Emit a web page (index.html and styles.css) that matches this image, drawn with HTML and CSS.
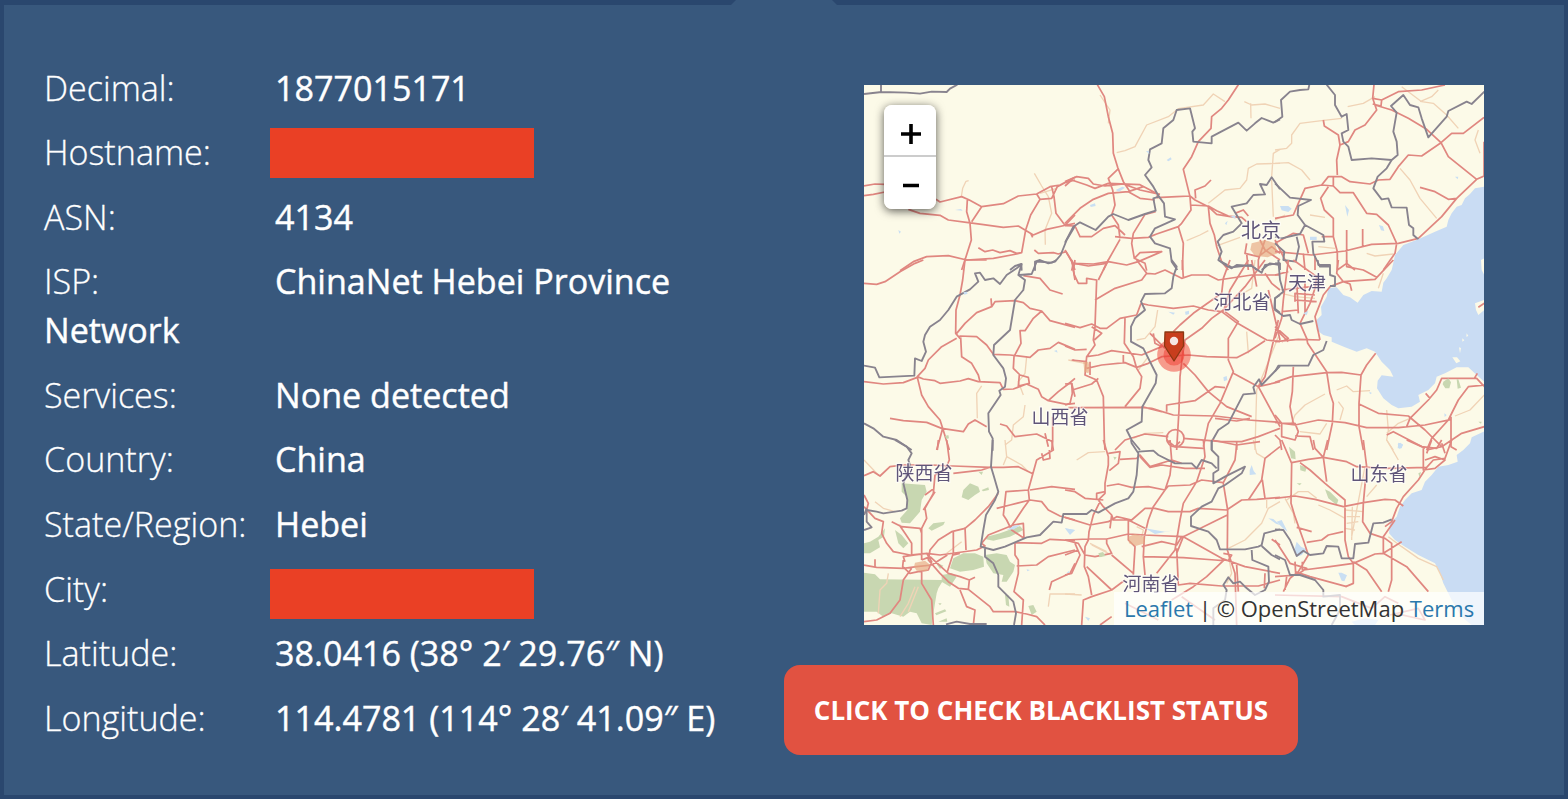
FILE: index.html
```html
<!DOCTYPE html>
<html lang="en">
<head>
<meta charset="utf-8">
<title>IP Details</title>
<link rel="stylesheet" href="styles.css">
</head>
<body>
<main class="panel">
  <span class="notch"></span>
  <section class="details">
    <p class="row"><span class="label">Decimal:</span><span class="value">1877015171</span></p>
    <p class="row"><span class="label">Hostname:</span><span class="redacted"></span></p>
    <p class="row"><span class="label">ASN:</span><span class="value">4134</span></p>
    <p class="row"><span class="label">ISP:</span><span class="value">ChinaNet Hebei Province</span><br><span class="value">Network</span></p>
    <p class="row"><span class="label">Services:</span><span class="value">None detected</span></p>
    <p class="row"><span class="label">Country:</span><span class="value">China</span></p>
    <p class="row"><span class="label">State/Region:</span><span class="value">Hebei</span></p>
    <p class="row"><span class="label">City:</span><span class="redacted low"></span></p>
    <p class="row"><span class="label">Latitude:</span><span class="value">38.0416 (38° 2′ 29.76″ N)</span></p>
    <p class="row"><span class="label">Longitude:</span><span class="value">114.4781 (114° 28′ 41.09″ E)</span></p>
  </section>
  <section class="side">
    <div class="map">
      <svg class="tiles" width="620" height="540" viewBox="0 0 620 540">
        <!-- north-west -->
        <g transform="translate(-4 -5) scale(.33333)">
          <path class="minor" d="M304 350L308 325L318 304L326 302M523 280L545 318L565 350L575 400L555 450L556 494M540 340L590 325"/>
          <path class="road" d="M12 318L45 312L75 313M12 347L40 343L75 336M228 358L240 366L305 350L328 360L365 380L430 371L475 348L530 342L570 320L600 315L645 292M145 388L180 400L240 406L265 420L325 428L365 433L430 442L475 438L520 465L560 448L620 435L645 430M365 380L335 425M322 360L320 395L330 430L334 480L318 530L305 570M120 572L160 545L200 530L265 527L320 540L400 535L470 522L485 518L497 450L512 405L540 358L530 342M355 503L375 515L398 510L420 518L450 512L470 520L485 518M523 510L535 520L580 518L595 522L618 515L635 545L645 570M540 358L575 355L592 320L615 308L645 300M575 320L582 350L588 400L615 436L645 405M512 460L518 472"/>
          <path class="border" d="M12 42L65 36L140 38L180 41L215 35L260 36L270 26L292 14M63 12L63 36M645 438L620 480L602 525L585 545L565 550L540 540L525 545L525 572M485 572L484 552L465 558L450 570"/>
          <path class="water" d="M115 450l8 5-5 6zM102 478l5 3zM285 390l18-3 5 5z"/>
        </g>
        <!-- north -->
        <g transform="translate(201 -5) scale(.33333)">
          <path class="minor" d="M155 218L180 212L210 200L245 135L310 110L340 86L415 75L445 42L480 65M538 65L560 75L600 72L645 85M557 70L558 115M430 370L480 330L525 325L545 300L550 265L575 252L645 250M645 208L625 220L620 290M365 482L405 465L430 452M455 498L525 472M620 300L625 410M105 45L135 90L130 130"/>
          <path class="road" d="M97 14L118 50L130 110L143 160L145 220L158 262L175 305L195 335M0 318L20 300L65 315L90 325L130 310L225 314L280 343L275 350M0 305L35 290L70 295L85 312L120 318L175 312L225 330L285 343M158 268L130 295L143 330L150 375L140 405L160 435L165 475M0 430L45 385L85 358L130 340L190 335L235 320M190 335L225 355L270 360M275 353L335 350L375 348L390 360L430 380L455 403L510 412M520 14L490 60L470 85L440 110L438 145L400 185L380 230L355 268L375 350L378 390L350 430L340 440L275 462L250 472L200 475L150 470M438 300L420 318L390 330L392 355M0 437L30 438L45 470L80 470L115 445L150 437L180 465M272 395L240 403L205 460L200 490L208 535L240 550L245 572M20 572L25 550L85 552L130 545L185 555L220 545L290 515L225 518L208 535M0 510L25 550M165 478L130 540L115 570M340 440L355 490L352 570M378 375L430 378L455 392L490 408L530 412L545 425M430 380L435 430L448 465L455 500L470 545L490 570M510 400L535 390L550 408M545 490L540 520L580 530L620 500L645 520M550 570L545 520M585 480L600 510L645 540M600 480L580 540L580 570"/>
          <path class="border" d="M645 118L625 128L610 122L590 114L570 130L545 152L520 128L440 170L440 190L385 185L382 155L390 145L375 85L335 90L325 120L295 145L290 190L255 208L250 240L260 262L240 285L265 320L282 350L297 370L300 410L330 418L270 445L255 470L270 490L315 505L320 545L337 570M282 350L265 355L272 392L240 402L190 420L145 402L130 410L92 450L45 427L25 440L0 488M645 328L620 292L605 315L585 312L600 343L565 345L545 370L500 380L530 430L505 455L475 465L458 485L470 515L460 540L500 562L560 555L575 570M590 570L615 550L645 555"/>
          <path class="water" d="M152 330l20-10 8 3-18 12zM75 375l15-5 2 8-15 3zM305 240l12-8 3 6-10 6zM243 213l8 0 2 10zM480 430l8-8-4 14zM495 410l15-4 3 10z"/>
          <path class="city" d="M560 490l40-10 30 10 8 30-30 12-38-5-14-18z"/>
        </g>
        <!-- north-east -->
        <g transform="translate(411 -5) scale(.33333)">
          <path class="minor" d="M0 210L35 205L50 190L50 165L75 130L140 122L200 115M0 250L40 248L80 270L105 300M218 80L265 70L300 50M380 20L440 65L475 70L515 105L550 145M435 65L470 50L490 30M375 265L405 300L435 355L485 415M610 150L600 180L615 220M105 405L150 412M275 520L300 528L355 522M0 420L30 405M130 500L180 505"/>
          <path class="road" d="M297 14L293 55L305 90L270 135L240 150L220 185L195 195L185 240L187 285M293 55L320 60L370 35L440 30L510 15M300 75L350 90L400 115L455 148L498 188L520 230L605 298M320 60L318 78L293 72M145 120L148 138L190 165L195 195M627 112L565 160L530 160L498 188L440 228L400 225L370 260L345 298L310 300L285 312L225 305L200 290L160 290L140 315L90 325L70 370L55 405L0 415M140 315L175 318L195 338L235 338L275 400L305 403L340 435L365 490M175 290L175 318M160 320L137 355L148 390L175 415L175 470L187 515L187 570M435 322L480 335L520 358L545 355M627 288L605 298L545 355L500 410L430 475L370 490L290 493L210 513L110 525L0 515M627 185L627 290M215 450L215 510L215 550L240 570M263 447L263 502M365 490L360 520L325 570M0 490L55 460L85 465L100 520M175 470L140 470M120 525L120 570M187 570L215 550M85 520L90 570M0 480L30 540L50 570"/>
          <path class="border" d="M0 126L22 110L18 60L45 35L75 30L100 28L103 14M155 14L180 45L180 75L200 110L215 102L220 150L200 160L205 185L220 200L230 240L290 235L350 240L368 225L365 185L355 155L365 98L348 78L385 45L405 75L430 82L440 115L460 172L515 110L520 93L575 65L590 72L628 35M350 240L335 265L308 290L295 325L320 358L340 355L350 382L395 383L402 435L415 445L415 465L432 480M0 310L45 353L108 360L70 378L68 405L90 435L75 462L20 475L0 470M90 435L145 465L148 485L112 485L115 520L135 560L165 560M65 470L72 500L62 545L25 540L28 515L0 490M0 550L15 550L15 570"/>
          <path class="water" d="M15 378l25 0 10 8-10 10-20-5zM105 470l20 0 0 10-20 0zM210 375l12 15-5 20zM312 435l12 4 4 14-10-2zM540 290l10 0-2 8zM480 220l10 2z"/>
        </g>
        <!-- west -->
        <g transform="translate(-4 175) scale(.33333)">
          <path class="minor" d="M365 378L350 400L352 475M500 290L495 340L475 365L490 405M495 435L490 470L460 495L455 540L435 555"/>
          <path class="road" d="M12 70L50 73L75 65L120 35L165 10L190 0M318 0L380 0M315 0L308 60L300 105L288 150L287 220L300 235M290 220L315 190L350 158L395 140L405 125L465 122L490 128L510 145L545 153L570 182L645 202M393 115L395 140M490 47L540 55L570 90L608 102M545 153L520 175L495 212L480 212L483 250L462 290L460 325L480 345L505 352L508 370L475 378L478 345M298 228L350 230L380 255L400 283L450 285L510 292L535 270L570 265L595 247L645 268M302 232L305 290L335 310L355 345L360 365M290 235L245 260L205 300L195 325L172 350L190 357L225 362L240 370L300 363L325 356L355 365L420 368L430 388L460 387L500 372L535 388L545 410L565 422L620 433L645 430M12 365L70 372L130 368L172 352L185 405L205 440L240 480L248 505L240 535L230 570M90 475L130 482L200 487L245 505L310 515L325 492L345 480L380 500M248 505L268 570M645 0L640 30L645 60M565 422L595 395L625 372L645 355M635 370L645 410M420 492L440 498L465 530L530 522L578 545L575 570M578 470L578 545M645 303L638 300M555 520L565 560"/>
          <path class="border" d="M12 317L45 323L58 352L163 347L165 295L185 303L198 275L190 245L195 225L210 200L240 180L265 150L290 110L330 88L355 65L345 40L360 38L375 60L400 55L420 72L440 45L470 25L485 12L475 45L495 60L490 90L465 120L450 210L402 255L400 285L430 325L438 355L435 380L418 392L422 405L385 460L387 515L398 535L398 572M478 45L515 42L530 5L575 8L590 0M12 490L40 505L70 530L110 540L155 570"/>
          <path class="water" d="M310 97l10-2 3 6-10 3zM582 273l8-3 3 8z"/>
          <path class="green" d="M255 528l10-3 2 10-8 2z"/>
        </g>
        <!-- centre -->
        <g transform="translate(201 175) scale(.33333)">
          <path class="minor" d="M278 150L270 200L240 235L215 240M250 290L220 330M545 215L550 280M640 230L600 330L575 390L570 570M205 535L240 520L295 518M500 120L560 85L570 0M10 300L60 310"/>
          <path class="road" d="M20 0L28 45L40 70L65 70L65 55L95 60L90 200L85 240L90 255L65 290L60 345L95 360L115 410L118 540L120 570M28 10L70 18L125 10L130 0M125 10L100 60M215 0L245 40L270 42L300 30L350 55L380 45L430 45L460 60L560 45L645 45M245 40L230 60L150 85L90 120M352 0L355 55M228 130L250 135L325 145L385 138L430 150L470 155L510 185L605 240L645 245M228 130L215 165L165 175L125 205L105 205L80 192L45 203L0 190M180 175L178 250L205 290L215 325L230 350L225 385L180 440M80 200L110 220L88 240M65 290L100 285L140 272L230 285L290 260L270 250L265 220M65 325L110 315L180 308L215 322L250 310L290 290L370 285L425 290L515 293L550 275L600 242M175 285L175 310M600 0L540 80L475 150L440 175L410 205L360 240L352 290L345 350L342 450L335 570M495 0L475 55L470 100L385 160L345 195L325 215M550 0L495 90L475 155M0 258L30 270L65 268M20 300L65 305M75 305L75 345M0 372L20 370L22 400L15 430L0 435M22 390L80 372L100 355M10 443L230 442L260 445L325 465L450 468L550 480L645 487M230 440L290 455M480 155L520 185L490 235L490 300L505 335L465 430L430 490L415 560M355 310L390 345L430 395L485 440L560 470M555 475L515 483L450 475M305 455L305 435L390 422L450 380L480 383M505 340L580 380L645 500M580 380L645 365M150 570L180 540L240 522L310 530M355 535L470 545L530 545L580 530L645 505M515 545L515 570M640 180L600 350L580 380M610 90L645 240M560 0L575 80M600 40L620 70L645 90M255 220L300 265"/>
          <circle class="road" cx="331" cy="535" r="26"/>
          <path class="border" d="M320 0L335 20L325 50L320 85L300 100L240 102L228 125L240 150L210 175L198 200L198 245L235 265L275 345L272 370L232 440L230 485L185 510L200 540L225 570M460 0L485 18L500 25L515 15L560 18L590 38L600 15L645 10M645 318L590 375L582 358L565 382L570 400L535 403L490 490L460 510L440 545L440 570M645 105L630 115L628 145L645 158"/>
          <path class="water" d="M360 155l12-3 0 10-10 3zM475 352l10-4 2 12-10 4zM310 155l20 3-5 6z"/>
          <path class="city" d="M55 305l15 0 5 20-5 15-12-5z"/>
        </g>
        <!-- east -->
        <g transform="translate(411 175) scale(.33333)">
          <path class="sea" d="M628 -220L600 -215L585 -198L570 -185L560 -165L545 -160L530 -140L520 -120L515 -100L480 -85L430 -62L385 -45L360 -15L355 8L350 30L335 55L325 68L320 95L290 93L265 105L248 128L225 112L205 105L185 82L160 85L155 110L138 140L140 165L125 180L125 210L145 225L170 232L170 245L210 262L245 275L275 265L300 275L320 305L345 330L355 350L320 346L308 362L306 385L325 415L350 435L370 445L410 440L435 425L430 405L460 390L480 370L485 350L510 340L545 322L580 322L605 345L628 365Z"/>
          <path class="land" d="M600 130L628 120L628 150L610 165L603 150ZM618 0L628 -5L628 45L620 30ZM575 220l5 8-6 2zM562 235l6 6-6 4zM552 262l6 2-3 16zM532 292l14 0 10 12-12 6z"/>
          <path class="minor" d="M185 390L215 378L235 395L285 392M150 402L90 435L60 465L50 490M190 425L205 445L195 480M75 515L135 522L155 490M628 405L585 450L540 468M335 450L340 510L335 540L355 570M335 520L370 490L405 475M20 100L60 110L120 115M325 40L310 85"/>
          <path class="road" d="M190 0L185 40L205 65L300 58L355 0M215 0L215 20L265 30L305 52M205 65L225 72L230 92M205 65L165 80L145 105L120 170L135 240M55 0L125 50L120 85L105 130L85 170L75 190L95 235L98 250L155 335L165 400L175 430L172 490L155 570M0 245L70 238L135 240M0 235L20 175L25 120L40 0M0 200L40 235L20 245M0 205L40 245M0 367L50 350L155 338L200 337L258 345L275 315L302 280M55 320L52 395L45 440L55 490M258 345L252 430L252 500L265 570M0 487L60 495L130 480L210 488L275 503L370 503L450 495L530 478M252 432L310 460L400 468L450 510L500 560M528 470L528 560L545 570M628 500L560 520L500 560L455 570M450 565L355 515L335 525M628 380L605 355L500 355L485 390L460 420L405 475L395 500M452 400L465 415M628 375L580 380L550 420L520 480L470 535L455 570M598 355L607 340M0 465L20 490L20 530L60 540L70 515L60 490L20 490M0 525L15 540L20 570M60 528L105 530L115 570M610 142L628 130M65 60L70 160M90 70L90 160M20 90L110 80M20 155L70 150M60 120L125 125M0 45L40 35M60 125L60 100L120 105"/>
          <path class="border" d="M10 0L15 60L25 95L0 115L0 150L25 168L45 165L50 180L75 192L115 183M128 0L130 15L165 15L165 45L180 50L180 78L165 78M155 243L145 270L115 285L100 317L10 317L0 335"/>
          <path class="green" d="M505 365l15-10 8 12-5 18-12 0-8-12zM545 358l5 0 8 25-10 3zM610 485l10 0-2 6z"/>
          <path class="water" d="M85 160l15-8-5 14zM370 548l14 5-4 12-12 0zM283 395l8 4-6 4zM508 460l7 5-6 6z"/>
        </g>
        <!-- south-west -->
        <g transform="translate(-4 355) scale(.33333)">
          <path class="green" d="M125 130L195 135L200 155L185 180L180 215L150 250L125 248L120 235L142 210L140 170L125 155ZM310 150L330 130L355 140L360 155L345 165L325 180L305 172ZM355 95l14 0-4 10zM365 150l20-8 2 8-18 4zM205 265L220 250L255 245L250 255L215 272ZM12 310L30 305L55 290L75 265L72 290L55 300L60 322L30 340L12 340ZM105 270L125 285L145 310L130 325L115 310ZM12 398L45 403L60 418L250 420L235 445L230 460L225 490L215 555L185 550L170 520L150 515L130 530L95 520L70 530L50 515L12 515ZM270 385L280 355L310 340L345 340L370 350L372 380L340 390L300 395ZM380 290L420 280L480 258L490 270L450 290L400 302L378 298ZM375 345L410 340L440 345L450 365L465 375L460 395L440 425L425 425L430 405L400 400L380 370ZM245 405L275 400L290 410L270 440L245 425ZM505 498L520 495L530 515L515 525ZM435 465L445 465L448 500L438 495ZM225 520l30-12 4 6-30 12zM235 545l25-10 2 10zM225 365l25 12-10 10zM235 490l10 0-5 6z"/>
          <path class="minor" d="M12 60L55 105M435 0L440 50L430 75M440 50L485 75L505 95M45 185L70 205L105 215M85 400L80 430L60 450L55 520M165 440L145 490L120 530M260 340L305 305M565 500L570 462L645 462M145 515L175 440"/>
          <path class="road" d="M12 107L40 95L60 108L90 80L130 75L215 75L280 78L390 82L430 82L475 80L520 102M260 0L268 60L255 90L225 105L220 160L195 205L200 235L185 265L185 360M235 0L232 30M280 100L350 92L365 90L395 80M12 200L45 235L70 245L65 280L80 310L100 335L150 345L200 340L240 345L350 330L375 318L365 310L385 285L460 255L490 250L492 295L455 270L440 240L430 225L438 155L505 150L530 60L580 30L575 0M545 40L550 60L570 55L568 30M415 160L385 200L345 240L315 265L275 275L235 300L210 330L205 360L240 400L265 425L295 445L325 448L390 500L400 515L465 515L500 522L530 530L555 555M510 150L575 140L645 148M505 150L508 180L490 205L450 265M410 205L450 195L510 180L545 185L565 210L600 228L645 240M280 275L280 340L262 395M315 262L318 330M95 245L125 260L180 265L185 280M118 255L135 280L155 310L155 345M12 375L50 382L130 385L170 380L215 375L262 345M45 358L45 382M185 360L210 350M185 395L185 430L215 480L220 555M155 385L130 420L120 480L90 520L50 540L12 545M130 360L128 380L150 400L175 395L205 390L215 365L200 340L165 345L130 350L135 365M210 350L265 400L300 410L328 420L325 448M328 420L345 412M300 450L320 500L345 510L340 555M465 308L545 310L570 298L645 302M465 308L465 345L475 360L475 400L462 455L490 480L485 555M470 378L530 375L565 350L645 330M645 370L630 400L575 425L568 450M195 165L222 145M190 210L225 155M12 165L25 190L20 210M280 345L300 340"/>
          <path class="border" d="M105 0L140 20L155 40L145 60L150 75L130 130L142 180L140 205L125 212L70 220L50 215L20 210L20 245L35 262L12 270M398 0L393 80L402 110L415 155L405 180L378 225L370 270L362 320L400 330L435 320L500 292L540 285L580 245L605 248L610 222L645 222M375 325L375 350L400 370L415 405L415 440L460 485L468 520L462 555M258 553L290 545L330 552L380 552M20 205L12 225"/>
          <path class="city" d="M165 368l30-6 15 12-10 20-30-2-8-12z"/>
          <path class="water" d="M440 270l20-12 22-4-20 14zM615 265l30 5-15 12zM500 388l10 2-8 4zM620 398l8-6 0 8z"/>
        </g>
        <!-- south -->
        <g transform="translate(201 355) scale(.33333)">
          <path class="minor" d="M35 60L70 38L120 35M565 0L575 40L600 55M645 185L610 205L590 250L540 300L490 325M80 315L130 340M0 462L50 465M490 345L500 400L485 430M605 180L605 205M215 260L235 270L230 290M75 310L125 335"/>
          <path class="road" d="M115 0L130 50L130 75L120 130L120 160L100 180L115 200L140 225L145 240L190 240L240 265M130 40L165 35L160 70L133 92M165 58L215 55L225 45L255 80L320 60L350 70M315 0L320 60L315 105L300 150L265 200L250 240L238 290L235 350L240 405M305 0L330 20L345 5M330 20L415 25M415 0L420 50L395 125L355 190L345 240L330 330L275 400M225 50L255 82L290 75L360 85L420 85M125 138L160 132L200 142L250 140L300 150L310 138L375 135L410 120L475 128L510 60L515 15M440 0L515 15L585 5M0 150L30 155L60 175L115 180M95 180L95 160L120 155M105 185L85 225L72 275L70 300L60 320L58 380L70 410L80 465M0 232L75 255L130 245L155 230L200 240L240 205L270 205L310 215L375 215L400 205L485 210L530 180L575 178L645 172M475 130L488 210L487 330L510 400L515 555M645 20L600 55L590 120L550 180M592 120L600 175M487 225L355 290L335 340M235 285L355 290L470 355L540 380L645 400M0 300L70 297L125 297L190 282L240 285M230 320L290 305L335 315L350 290M235 350L355 353L450 360L475 362L425 410L385 440L320 480M190 240L190 300L210 320L205 405M125 295L125 310L140 340L90 350L60 345L40 310L0 300M140 345L205 400M0 405L20 400L45 345L30 310M65 380L140 450L80 470L55 480L50 555M140 450L180 420M335 325L340 435L375 430L470 438L580 438L645 420M475 340L500 345L490 362L470 358M600 400L598 445M620 298L645 315M135 265L140 225M105 555L140 530M515 375L520 455M180 490L280 540M350 470L450 540M0 345L40 330"/>
          <path class="border" d="M0 222L65 222L80 210L100 218L150 190L190 175L205 155L215 105L220 40L200 10L198 0M220 35L265 32L280 45L330 70L380 70L395 85L410 60L440 70L455 85M440 0L440 30L460 50L460 90L445 100L445 130L480 110L540 80L530 100L480 135L460 145L440 185L410 200L378 230L378 258L430 275L455 300L465 328L540 328L580 320L590 315L598 280L645 268M560 330L562 360L610 380L612 425L600 450L570 465L540 440L525 425L505 430L490 412L475 435L485 450L480 480L445 505L445 555M590 318L620 345L645 358"/>
          <path class="city" d="M190 290l20-8 28 8 2 20-28 8-20-8z"/>
          <path class="water" d="M560 75l6 18 8 10-20 2 0-14zM0 265l30 5-15 15zM610 235l15 2 20 18-12-4zM60 530l15 5-5 8zM240 265l60 10 30-5-60 12z"/>
          <path class="green" d="M100 340l14-4 8 12-18 4zM145 50l10 2-6 8z"/>
        </g>
        <!-- south-east -->
        <g transform="translate(411 355) scale(.33333)">
          <path class="sea" d="M628 -26L590 -8L585 10L565 30L545 45L548 65L520 75L490 80L470 105L450 125L440 150L410 160L390 180L375 200L365 230L345 250L342 280L360 300L390 320L430 345L480 370L495 400L505 430L530 480L560 530L590 555L628 555Z"/>
          <path class="water" d="M65 305L78 320L95 328L80 345L65 350L58 330ZM190 398l10 0 16 8-8 18-8-2zM368 12l8-4 8 8-10 12zM5 245l15-5 18 35-12-8zM230 545l40-10 40 5-10 15-60 0z"/>
          <path class="green" d="M42 20L60 35L62 58L48 55ZM75 75l20 8-4 12-15-4zM150 148L165 155L190 180L185 195L160 175ZM430 100l8-4-4 16zM65 130l15 0-6 6z"/>
          <path class="minor" d="M335 0L350 25L370 60M35 180L70 155L100 155L125 175M30 175L55 220L60 250M270 80L245 210L230 290M130 195L165 210L210 235M210 210L265 215M215 250L250 245M215 230L255 230M232 200L230 300M210 265L240 270M305 135L275 170M340 290L380 320L430 355L485 380L505 420"/>
          <path class="road" d="M20 0L50 70L48 190L60 230L85 300L100 345L70 395L45 415L25 455M115 0L120 25L145 52L158 0M145 52L155 125M265 0L275 80L265 190L263 245L285 280L330 295L350 310L350 420L340 455M50 68L100 58L145 52L215 65L245 80L340 85L455 82L475 60L510 55L530 0M75 68L105 90L150 130L210 180L210 300L220 350L235 370L235 430L212 440M0 175L60 168L120 178L205 200L265 188L330 178L360 180L385 198M95 307L140 300L160 285L205 275M65 262L110 275M395 0L440 20L485 25L500 0M445 25L445 90L480 85L510 60L480 50L450 60M360 240L325 290L325 340M85 390L165 380L235 370L300 342L325 340L380 305M235 365L275 390L320 455M325 340L395 380L460 455M60 395L105 410L215 440M0 410L65 405L95 385L45 370L0 300M455 82L430 120L385 170L365 205L350 245L330 260M470 0L455 40M500 10L510 40M60 365L62 400M82 365L82 390M35 410L30 450M0 465L200 470L290 505L330 470L370 490M345 525L430 505L450 540L360 520"/>
          <path class="border" d="M0 268L25 270L45 300L65 348L85 332L105 345L145 340L155 318L190 320L200 355L235 355L240 312L280 308L295 250L325 248L350 238M0 345L30 360L45 405L75 405L120 420L145 450L145 470L195 465L195 510L170 555"/>
        </g>
        <g class="names">
          <text class="large" x="397" y="153">北京</text>
          <text x="443" y="205">天津</text>
          <text x="378" y="224">河北省</text>
          <text x="196" y="339">山西省</text>
          <text x="60" y="395">陕西省</text>
          <text x="515" y="396">山东省</text>
          <text x="287" y="506">河南省</text>
        </g>
        <circle class="halo" cx="310" cy="270" r="16.8"/>
        <circle class="halo" cx="310" cy="270" r="10.5"/>
        <path class="pin" d="M301 247h18.500v14L310 276L300.500 261z"/>
        <circle class="eye" cx="310" cy="256" r="4.200"/>
      </svg>
      <div class="zoom">
        <button class="zoom-btn" aria-label="Zoom in"><svg width="20" height="20"><path d="M0 10H20M10 0V20"/></svg></button>
        <button class="zoom-btn" aria-label="Zoom out"><svg width="20" height="20"><path d="M2 9.500H18"/></svg></button>
      </div>
      <div class="credit"><a>Leaflet</a> | © OpenStreetMap <a>Terms</a></div>
    </div>
    <button class="check">CLICK TO CHECK BLACKLIST STATUS</button>
  </section>
</main>
</body>
</html>
```
FILE: styles.css
```css
* { box-sizing: border-box; }

body {
  margin: 0;
  font-family: "Open Sans", sans-serif;
  color: #fff;
}

.panel {
  position: relative;
  display: flex;
  width: 1568px;
  height: 799px;
  border: 4px solid #2a476e;
  border-top-width: 5px;
  background: #38587d;
}

.notch {
  position: absolute;
  top: -5px;
  left: 727px;
  width: 106px;
  height: 5px;
  background: #38587d;
  clip-path: polygon(5px 0, 101px 0, 100% 100%, 0 100%);
}

.details {
  width: 740px;
  padding: 58.5px 0 0 40px;
}

.row {
  margin: 0 0 15.6px;
  font-size: 34.08px;
  line-height: 49px;
}

.label {
  display: inline-block;
  width: 231px;
  font-weight: 300;
  -webkit-text-stroke: .3px #fff;
}

.value {
  font-weight: 500;
  -webkit-text-stroke: .4px #fff;
}

.redacted {
  display: inline-block;
  width: 264px;
  height: 50px;
  margin: -.5px 0 -.5px -5.5px;
  vertical-align: top;
  background: #ea4025;
}

.redacted.low { margin: 4.5px 0 -5.5px -5.5px; }

.side {
  flex: 1;
  padding: 80px 0 0 40px;
}

.map {
  position: relative;
  width: 620px;
  height: 540px;
  margin-left: 80px;
  overflow: hidden;
  background: #fcfae8;
}

.tiles {
  display: block;
  filter: blur(.45px);
}

.tiles path, .tiles circle.road {
  fill: none;
  stroke-linejoin: round;
}

.tiles .road { stroke: #e08780; stroke-width: 5.2; }
.tiles .minor { stroke: #f0d3b6; stroke-width: 4; }
.tiles .border { stroke: #88838e; stroke-width: 5.6; }
.tiles .sea { fill: #c9dcf3; }
.tiles .land { fill: #fcfae8; }
.tiles .water { fill: #c9dff3; }
.tiles .green { fill: #c8d7b1; }
.tiles .city { fill: #e6a87f; fill-opacity: .65; }

.names {
  font: 19px "Noto Sans CJK SC", sans-serif;
  text-anchor: middle;
  fill: #5f5579;
  stroke: rgba(255, 255, 255, .55);
  stroke-width: 2.5px;
  paint-order: stroke;
}

.names .large { font-size: 20px; }

.halo { fill: #f03c30; fill-opacity: .5; }
.tiles .pin { fill: #c83e1d; stroke: #8c3812; stroke-width: 1.3; }
.eye { fill: #f5e6e3; }

.zoom {
  position: absolute;
  top: 20px;
  left: 20px;
  width: 52px;
  overflow: hidden;
  border-radius: 8px;
  box-shadow: 0 2px 10px rgba(0, 0, 0, .65);
}

.zoom-btn {
  display: grid;
  place-items: center;
  width: 52px;
  height: 52px;
  padding: 5px 0 0 2px;
  border: 0;
  background: #fff;
}

.zoom-btn:first-child {
  padding-top: 8px;
  border-bottom: 2px solid #ccc;
}

.zoom-btn path { fill: none; stroke: #000; stroke-width: 3.6; }

.credit {
  position: absolute;
  right: 0;
  bottom: 0;
  width: 370px;
  height: 33px;
  padding: 0 10px;
  font-size: 22px;
  line-height: 33px;
  white-space: nowrap;
  color: #333;
  background: rgba(255, 255, 255, .7);
}

.credit a { color: #2a78ac; }

.check {
  display: block;
  width: 514px;
  height: 90px;
  margin-top: 40px;
  padding: 0;
  border: 0;
  border-radius: 16px;
  font: 700 26px "Open Sans", sans-serif;
  white-space: nowrap;
  color: #fff;
  background: #e15241;
}
```
